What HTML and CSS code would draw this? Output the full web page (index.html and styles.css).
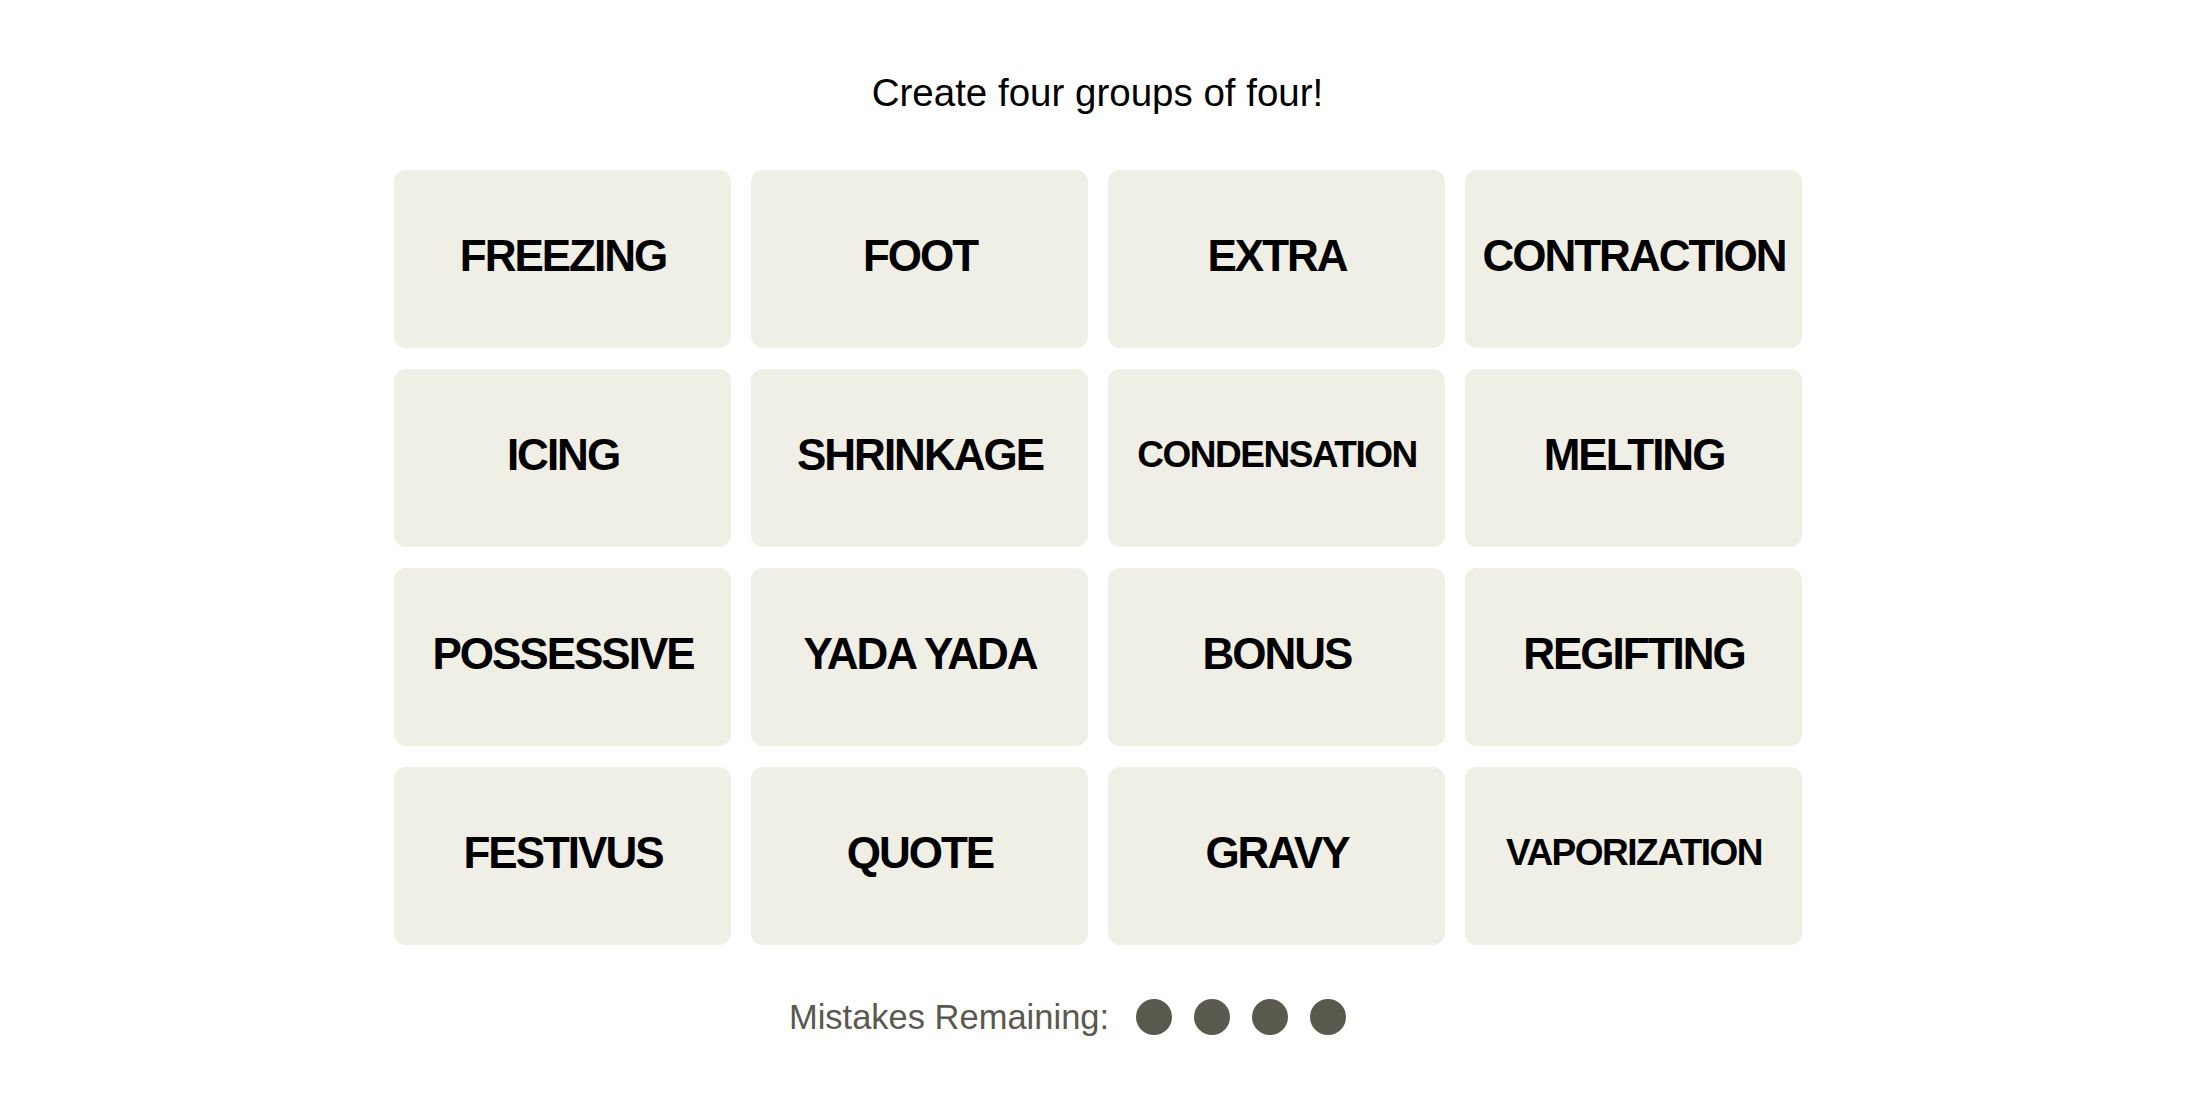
FILE: index.html
```html
<!DOCTYPE html>
<html lang="en">
<head>
<meta charset="utf-8">
<title>Connections</title>
<link rel="stylesheet" href="styles.css">
</head>
<body>
<main class="game">
  <p class="prompt">Create four groups of four!</p>
  <div class="board">
    <button class="tile">FREEZING</button>
    <button class="tile">FOOT</button>
    <button class="tile">EXTRA</button>
    <button class="tile">CONTRACTION</button>
    <button class="tile">ICING</button>
    <button class="tile">SHRINKAGE</button>
    <button class="tile tile-small">CONDENSATION</button>
    <button class="tile">MELTING</button>
    <button class="tile">POSSESSIVE</button>
    <button class="tile">YADA YADA</button>
    <button class="tile">BONUS</button>
    <button class="tile">REGIFTING</button>
    <button class="tile">FESTIVUS</button>
    <button class="tile">QUOTE</button>
    <button class="tile">GRAVY</button>
    <button class="tile tile-small">VAPORIZATION</button>
  </div>
  <div class="mistakes">
    <span class="mistakes-label">Mistakes Remaining:</span>
    <span class="dots">
      <span class="dot"></span>
      <span class="dot"></span>
      <span class="dot"></span>
      <span class="dot"></span>
    </span>
  </div>
</main>
</body>
</html>
```

FILE: styles.css
```css
html, body {
  margin: 0;
  padding: 0;
  background: #ffffff;
}

.game {
  display: flex;
  flex-direction: column;
  align-items: center;
  padding: 69px 5px 0 0;
  font-family: "Liberation Sans", Arial, sans-serif;
}

.prompt {
  margin: 0;
  font-size: 38.5px;
  line-height: 48px;
  color: #000000;
}

.board {
  margin-top: 53px;
  display: grid;
  grid-template-columns: repeat(4, 337px);
  grid-auto-rows: 178px;
  column-gap: 20px;
  row-gap: 21px;
}

.tile {
  display: flex;
  align-items: center;
  justify-content: center;
  border: none;
  margin: 0;
  padding: 0 0 6px 2px;
  background: #efefe6;
  border-radius: 12px;
  color: #000000;
  font-family: "Liberation Sans", Arial, sans-serif;
  font-weight: 700;
  font-size: 44px;
  letter-spacing: -2px;
  white-space: nowrap;
}

.tile-small {
  font-size: 37px;
  letter-spacing: -1.5px;
}

.mistakes {
  margin-top: 52px;
  display: flex;
  align-items: center;
  height: 40px;
}

.mistakes-label {
  font-size: 34.5px;
  line-height: 40px;
  color: #5a594e;
}

.dots {
  display: flex;
  gap: 22px;
  margin-left: 27px;
  padding-right: 60px;
}

.dot {
  width: 36px;
  height: 36px;
  border-radius: 50%;
  background: #5a594e;
}
```
